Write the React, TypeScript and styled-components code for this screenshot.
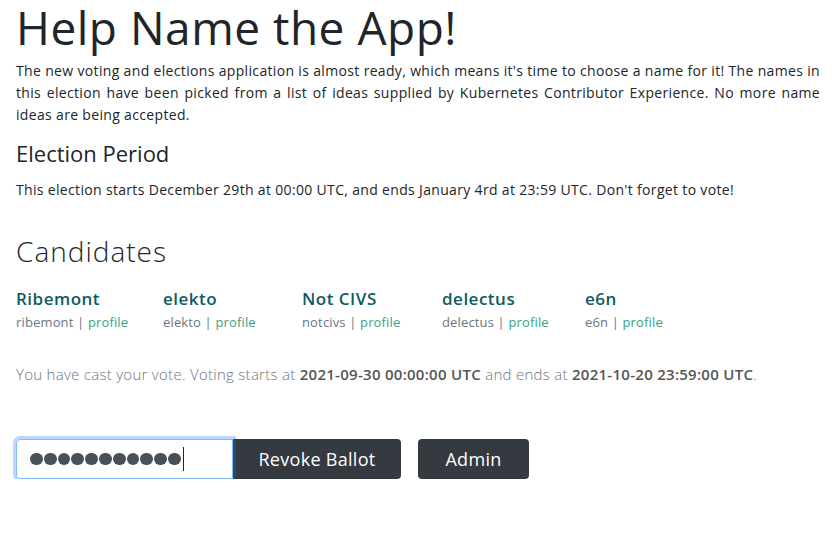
import React from "react";
import styled, { createGlobalStyle } from "styled-components";

const Global = createGlobalStyle`
  html, body { margin: 0; padding: 0; background: #fff; }
  body { font-family: "Open Sans", "Noto Sans", sans-serif; color: #212529; }
`;

const Page = styled.main`
  padding: 0 16px;
  display: flex;
  flex-direction: column;
`;

const Title = styled.h1`
  margin: 0 0 5px;
  font-size: 46px;
  line-height: 55px;
  font-weight: 400;
  letter-spacing: 0.5px;
  color: #212529;
`;

const Para = styled.p<{ $mb?: number }>`
  margin: 0 0 ${(p) => p.$mb ?? 14}px;
  font-size: 14px;
  line-height: 22px;
  letter-spacing: 0.33px;
  text-align: justify;
  color: #212529;
`;

const SubHeading = styled.h3`
  margin: 0 0 13px;
  font-size: 22px;
  line-height: 26px;
  font-weight: 500;
`;

const SectionHeading = styled.h2`
  margin: 33px 0 18px;
  font-size: 28px;
  line-height: 34px;
  font-weight: 300;
  letter-spacing: 1px;
`;

const CandidateList = styled.div`
  display: grid;
  grid-template-columns: 147px 139px 140px 143px auto;
`;

const Candidate = styled.div`
  display: flex;
  flex-direction: column;
`;

const CandidateName = styled.div`
  font-size: 17px;
  line-height: 26px;
  font-weight: 600;
  letter-spacing: 0.5px;
  color: #0d5b5f;
`;

const CandidateMeta = styled.div`
  font-size: 13px;
  line-height: 20px;
  letter-spacing: 0.15px;
  color: #6c757d;
`;

const ProfileLink = styled.a`
  color: #3aa17f;
  text-decoration: none;
`;

const VoteInfo = styled.p`
  margin: 31px 0 54px;
  font-size: 15px;
  line-height: 22px;
  font-weight: 300;
  letter-spacing: 0.28px;
  color: #6c757d;
  strong { font-weight: 600; color: #555; }
`;

const Actions = styled.div`
  display: flex;
  align-items: center;
  gap: 17px;
`;

const InputGroup = styled.div`
  display: flex;
  align-items: stretch;
`;

const PasswordBox = styled.div`
  box-sizing: border-box;
  width: 217px;
  height: 40px;
  border: 1px solid #86b7fe;
  border-radius: 4px 0 0 4px;
  box-shadow: 0 0 0 3px rgba(13, 110, 253, 0.28);
  display: flex;
  align-items: center;
  padding-left: 13px;
  position: relative;
  z-index: 1;
`;

const Dots = styled.span`
  display: flex;
  gap: 1px;
`;

const Dot = styled.span`
  width: 12.8px;
  height: 12.8px;
  border-radius: 50%;
  background: #495057;
`;

const Caret = styled.span`
  width: 1.5px;
  height: 24px;
  background: #212529;
  margin-left: 2px;
`;

const DarkButton = styled.button<{ $joined?: boolean; $w: number }>`
  box-sizing: border-box;
  width: ${(p) => p.$w}px;
  height: 40px;
  border: none;
  background: #343a40;
  color: #fff;
  font-family: "Open Sans", "Noto Sans", sans-serif;
  font-size: 18px;
  letter-spacing: 0.3px;
  border-radius: ${(p) => (p.$joined ? "0 4px 4px 0" : "4px")};
  cursor: pointer;
`;

const candidates = [
  { name: "Ribemont", id: "ribemont" },
  { name: "elekto", id: "elekto" },
  { name: "Not CIVS", id: "notcivs" },
  { name: "delectus", id: "delectus" },
  { name: "e6n", id: "e6n" },
];

export default function App() {
  return (
    <>
      <Global />
      <Page>
        <Title>Help Name the App!</Title>
        <Para>
          The new voting and elections application is almost ready, which means it's time to choose a
          name for it! The names in this election have been picked from a list of ideas supplied by
          Kubernetes Contributor Experience. No more name ideas are being accepted.
        </Para>
        <SubHeading>Election Period</SubHeading>
        <Para $mb={0}>
          This election starts December 29th at 00:00 UTC, and ends January 4rd at 23:59 UTC. Don't
          forget to vote!
        </Para>
        <SectionHeading>Candidates</SectionHeading>
        <CandidateList>
          {candidates.map((c) => (
            <Candidate key={c.id}>
              <CandidateName>{c.name}</CandidateName>
              <CandidateMeta>
                {c.id} | <ProfileLink href="#">profile</ProfileLink>
              </CandidateMeta>
            </Candidate>
          ))}
        </CandidateList>
        <VoteInfo>
          You have cast your vote. Voting starts at <strong>2021-09-30 00:00:00 UTC</strong> and ends
          at <strong>2021-10-20 23:59:00 UTC</strong>.
        </VoteInfo>
        <Actions>
          <InputGroup>
            <PasswordBox>
              <Dots>
                {Array.from({ length: 11 }).map((_, i) => (
                  <Dot key={i} />
                ))}
              </Dots>
              <Caret />
            </PasswordBox>
            <DarkButton $joined $w={168}>Revoke Ballot</DarkButton>
          </InputGroup>
          <DarkButton $w={111}>Admin</DarkButton>
        </Actions>
      </Page>
    </>
  );
}
